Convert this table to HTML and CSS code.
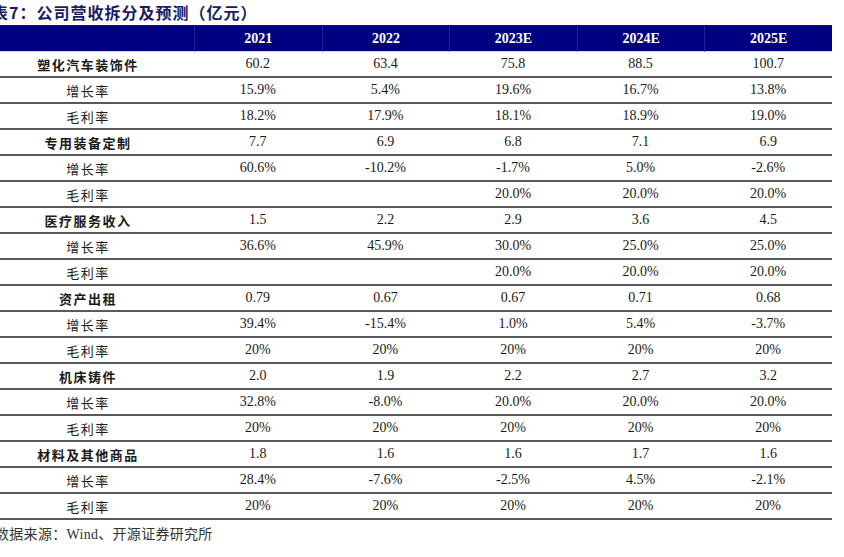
FILE: index.html
```html
<!DOCTYPE html>
<html lang="zh">
<head>
<meta charset="utf-8">
<link rel="stylesheet" href="styles.css">
</head>
<body>
<div class="title">表7：公司营收拆分及预测（亿元）</div>
<table class="fin">
<colgroup><col class="c0"><col><col><col><col><col></colgroup>
<thead>
<tr><th></th><th>2021</th><th>2022</th><th>2023E</th><th>2024E</th><th>2025E</th></tr>
</thead>
<tbody>
<tr><td class="cat">塑化汽车装饰件</td><td>60.2</td><td>63.4</td><td>75.8</td><td>88.5</td><td>100.7</td></tr>
<tr><td class="sub">增长率</td><td>15.9%</td><td>5.4%</td><td>19.6%</td><td>16.7%</td><td>13.8%</td></tr>
<tr><td class="sub">毛利率</td><td>18.2%</td><td>17.9%</td><td>18.1%</td><td>18.9%</td><td>19.0%</td></tr>
<tr><td class="cat">专用装备定制</td><td>7.7</td><td>6.9</td><td>6.8</td><td>7.1</td><td>6.9</td></tr>
<tr><td class="sub">增长率</td><td>60.6%</td><td>-10.2%</td><td>-1.7%</td><td>5.0%</td><td>-2.6%</td></tr>
<tr><td class="sub">毛利率</td><td></td><td></td><td>20.0%</td><td>20.0%</td><td>20.0%</td></tr>
<tr><td class="cat">医疗服务收入</td><td>1.5</td><td>2.2</td><td>2.9</td><td>3.6</td><td>4.5</td></tr>
<tr><td class="sub">增长率</td><td>36.6%</td><td>45.9%</td><td>30.0%</td><td>25.0%</td><td>25.0%</td></tr>
<tr><td class="sub">毛利率</td><td></td><td></td><td>20.0%</td><td>20.0%</td><td>20.0%</td></tr>
<tr><td class="cat">资产出租</td><td>0.79</td><td>0.67</td><td>0.67</td><td>0.71</td><td>0.68</td></tr>
<tr><td class="sub">增长率</td><td>39.4%</td><td>-15.4%</td><td>1.0%</td><td>5.4%</td><td>-3.7%</td></tr>
<tr><td class="sub">毛利率</td><td>20%</td><td>20%</td><td>20%</td><td>20%</td><td>20%</td></tr>
<tr><td class="cat">机床铸件</td><td>2.0</td><td>1.9</td><td>2.2</td><td>2.7</td><td>3.2</td></tr>
<tr><td class="sub">增长率</td><td>32.8%</td><td>-8.0%</td><td>20.0%</td><td>20.0%</td><td>20.0%</td></tr>
<tr><td class="sub">毛利率</td><td>20%</td><td>20%</td><td>20%</td><td>20%</td><td>20%</td></tr>
<tr><td class="cat">材料及其他商品</td><td>1.8</td><td>1.6</td><td>1.6</td><td>1.7</td><td>1.6</td></tr>
<tr><td class="sub">增长率</td><td>28.4%</td><td>-7.6%</td><td>-2.5%</td><td>4.5%</td><td>-2.1%</td></tr>
<tr><td class="sub">毛利率</td><td>20%</td><td>20%</td><td>20%</td><td>20%</td><td>20%</td></tr>
</tbody>
</table>
<div class="source">数据来源：Wind、开源证券研究所</div>
</body>
</html>
```
FILE: styles.css
```css
html, body {
  margin: 0;
  padding: 0;
  background: #ffffff;
}
body {
  font-family: "Liberation Serif", "Noto Sans CJK SC", serif;
  color: #1a1a1a;
  overflow: hidden;
}
.title {
  margin-left: -8px;
  height: 25px;
  line-height: 24px;
  font-family: "Noto Sans CJK SC", sans-serif;
  font-weight: 700;
  font-size: 16px;
  letter-spacing: 1px;
  color: #1a1a66;
  white-space: nowrap;
}
.fin {
  width: 832px;
  border-collapse: separate;
  border-spacing: 0;
  table-layout: fixed;
}
.fin .c0 {
  width: 194px;
}
.fin th {
  height: 25px;
  padding: 0;
  background: #000080;
  color: #ffffff;
  font-family: "Liberation Serif", serif;
  font-weight: 700;
  font-size: 14px;
  text-align: center;
  border-top: 1px solid #1a1a2e;
  border-bottom: 1px solid #d8d8e0;
  border-left: 1px solid #23239a;
}
.fin th:first-child {
  border-left: none;
}
.fin td {
  height: 24px;
  padding: 0;
  text-align: center;
  font-size: 14px;
  color: #1a1a1a;
  border-bottom: 2px solid #5a5a5a;
}
.fin td.cat,
.fin td.sub {
  font-family: "Noto Sans CJK SC", sans-serif;
  padding-right: 18px;
  font-size: 13px;
}
.fin td.cat {
  font-weight: 700;
  letter-spacing: 1.5px;
}
.fin td.sub {
  letter-spacing: 1.5px;
}
.source {
  margin-left: -5px;
  margin-top: 3px;
  font-family: "Liberation Serif", "Noto Sans CJK SC", serif;
  font-size: 14px;
  letter-spacing: 0.3px;
  color: #333333;
  white-space: nowrap;
}
```
